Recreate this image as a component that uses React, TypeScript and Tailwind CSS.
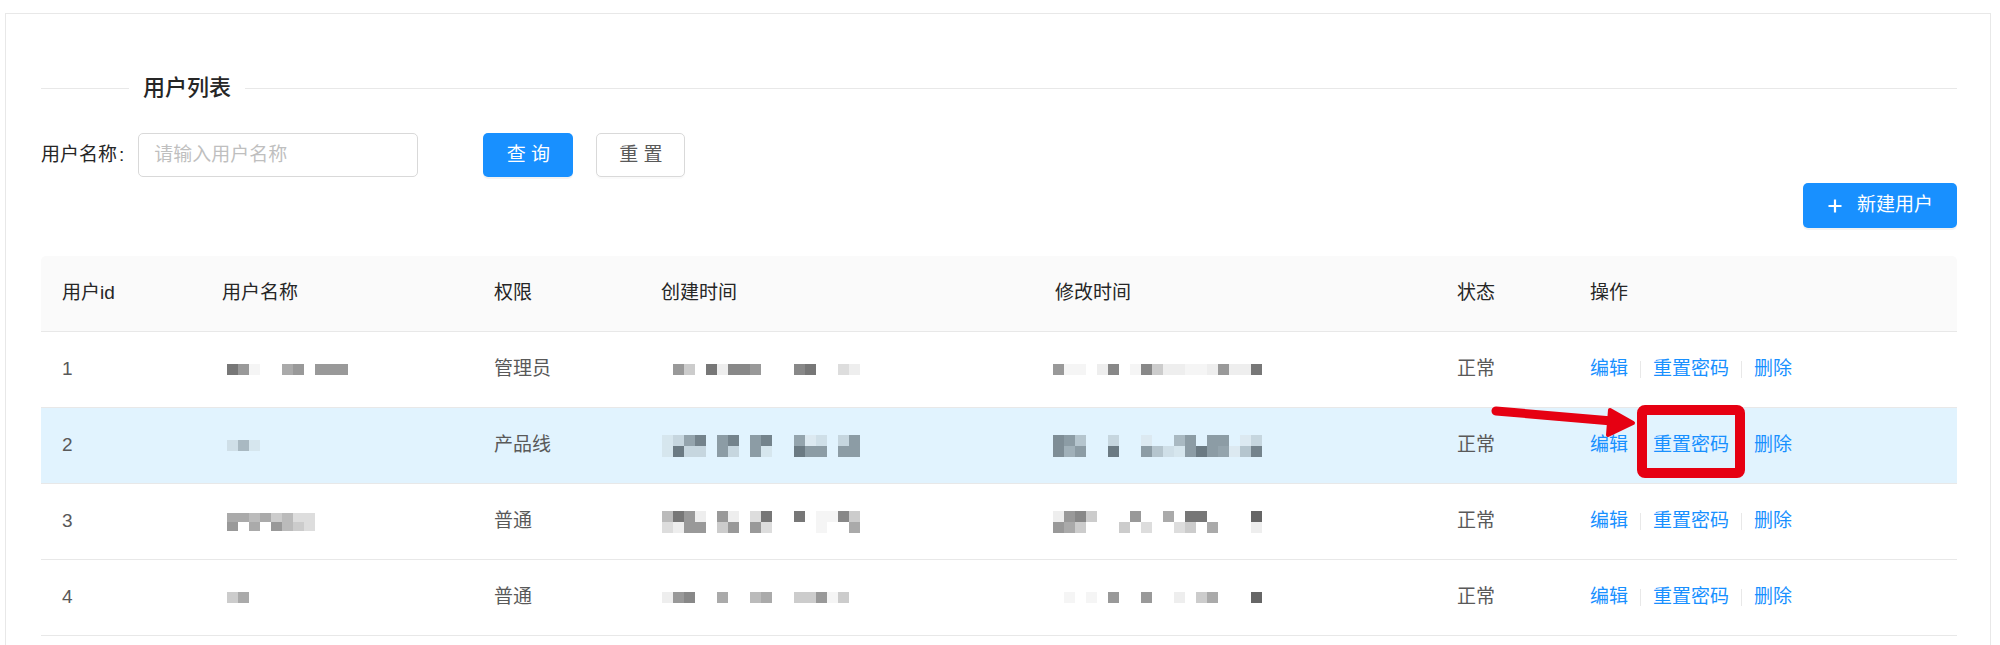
import React from "react";

// mosaic palette: pixelated (blurred) cell contents
const px: Record<string, string> = {
  "1": "bg-[#666]",
  "2": "bg-[#777]",
  "3": "bg-[#888]",
  "4": "bg-[#999]",
  "5": "bg-[#aaa]",
  "6": "bg-[#bbb]",
  "7": "bg-[#ccc]",
  "8": "bg-[#ddd]",
  "9": "bg-[#eee]",
  "0": "bg-[#f5f5f5]",
  a: "bg-[#6b7a83]",
  b: "bg-[#74838c]",
  c: "bg-[#7e8d96]",
  d: "bg-[#8c9ca5]",
  e: "bg-[#94a4ad]",
  f: "bg-[#a0b0b9]",
  g: "bg-[#a9b9c2]",
  h: "bg-[#b5c5ce]",
  i: "bg-[#c6d6df]",
  j: "bg-[#cfdfe8]",
  k: "bg-[#d6e6ee]",
  l: "bg-[#dce9f1]",
};

const Mosaic = ({ rows, cell = "h-[11px]" }: { rows: string[]; cell?: string }) => (
  <div className="flex flex-col">
    {rows.map((r, i) => (
      <div key={i} className="flex">
        {r.split("").map((c, j) => (
          <div key={j} className={"w-[11px] " + cell + " " + (px[c] ?? "")} />
        ))}
      </div>
    ))}
  </div>
);

const users = [
  {
    id: "1",
    name: ["240..54.444"],
    role: "管理员",
    created: [".47.29334...32..89"],
    modified: ["400.93.037990094992"],
  },
  {
    id: "2",
    name: ["jgk"],
    role: "产品线",
    created: ["kieb.db.db..elj.id", "kaii.di.dk..add.dd"],
    modified: ["cdh..i..l..gd.dd.li", "cfd..a..dhjkdadelhb"],
    active: true,
  },
  {
    id: "3",
    name: ["55657688", "4.5.4678"],
    nameCell: "h-[9px]",
    role: "普通",
    created: ["6249.49.82..2.0037", "8944.74.48....0..5"],
    modified: ["9437...4..5.22....1", "457...7.8..87.5...9"],
  },
  {
    id: "4",
    name: ["75"],
    role: "普通",
    created: ["943..5..65..77407"],
    modified: [".0.0.4..4..9.75...1"],
  },
];

const cols = "grid grid-cols-[160px_272px_167px_394px_402px_133px_1fr] items-center";

const Sep = () => <span className="mx-[12px] w-px h-[17px] bg-[#e8e8e8]" />;

export default function App() {
  return (
    <div className="relative w-[2000px] h-[645px] overflow-hidden bg-white font-['Liberation_Sans','Noto_Sans_CJK_SC',sans-serif] text-[19px] text-[#595959]">
      <div className="ml-[5px] mt-[13px] w-[1986px] h-[700px] border border-[#e8e8e8] pt-[57px] pl-[35px] pr-[33px]">
        {/* divider title */}
        <div className="flex items-center h-[34px]">
          <div className="w-[88px] h-px bg-[#e8e8e8]" />
          <span className="px-[14px] text-[22px] font-medium text-[#262626] leading-none">用户列表</span>
          <div className="flex-1 h-px bg-[#e8e8e8]" />
        </div>

        {/* search form */}
        <div className="mt-[28px] flex items-center h-[44px]">
          <label className="text-[#262626] flex items-center">
            用户名称<span className="ml-[2px] mr-[14px]">:</span>
          </label>
          <input
            className="w-[280px] h-[44px] border border-[#d9d9d9] rounded-[5px] px-[15px] text-[19px] outline-none placeholder:text-[#bfbfbf]"
            placeholder="请输入用户名称"
          />
          <button className="ml-[65px] w-[90px] h-[44px] rounded-[5px] bg-[#1890ff] text-white shadow-[0_2px_0_rgba(0,0,0,0.05)]">
            查 询
          </button>
          <button className="ml-[23px] w-[89px] h-[44px] rounded-[5px] border border-[#d9d9d9] bg-white text-[#595959] shadow-[0_2px_0_rgba(0,0,0,0.02)]">
            重 置
          </button>
        </div>

        <div className="mt-[6px] flex justify-end">
          <button className="w-[154px] h-[45px] rounded-[5px] bg-[#1890ff] text-white flex items-center pl-[25px] gap-[15px] shadow-[0_2px_0_rgba(0,0,0,0.05)]">
            <svg width="14" height="14" viewBox="0 0 14 14">
              <path d="M7 0.5v13M0.5 7h13" stroke="white" strokeWidth="2.2" />
            </svg>
            新建用户
          </button>
        </div>

        {/* table */}
        <div className="mt-[28px]">
          <div className={cols + " h-[76px] bg-[#fafafa] rounded-t-[5px] border-b border-[#e8e8e8] text-[#262626]"}>
            {["用户id", "用户名称", "权限", "创建时间", "修改时间", "状态", "操作"].map((h) => (
              <div key={h} className="pl-[21px]">
                {h}
              </div>
            ))}
          </div>
          {users.map((u) => (
            <div
              key={u.id}
              className={cols + " h-[76px] border-b border-[#e8e8e8] " + (u.active ? "bg-[#e1f3fe]" : "bg-white")}
            >
              <div className="pl-[21px]">{u.id}</div>
              <div className="pl-[26px]">
                <Mosaic rows={u.name} cell={u.nameCell} />
              </div>
              <div className="pl-[21px]">{u.role}</div>
              <div className="pl-[22px]">
                <Mosaic rows={u.created} />
              </div>
              <div className="pl-[19px]">
                <Mosaic rows={u.modified} />
              </div>
              <div className="pl-[21px]">正常</div>
              <div className="pl-[21px] flex items-center text-[#1890ff]">
                <span>编辑</span>
                <Sep />
                <span>重置密码</span>
                <Sep />
                <span>删除</span>
              </div>
            </div>
          ))}
        </div>
      </div>

      {/* red annotation */}
      <svg className="absolute left-0 top-0 pointer-events-none" width="2000" height="645">
        <line x1="1496" y1="411" x2="1612" y2="421" stroke="#e60012" strokeWidth="9" strokeLinecap="round" />
        <polygon points="1610,410 1633,423 1608,435" fill="#e60012" stroke="#e60012" strokeWidth="4" strokeLinejoin="round" />
        <rect x="1642" y="410" width="98" height="63" rx="3" fill="none" stroke="#e60012" strokeWidth="10" />
      </svg>
    </div>
  );
}
